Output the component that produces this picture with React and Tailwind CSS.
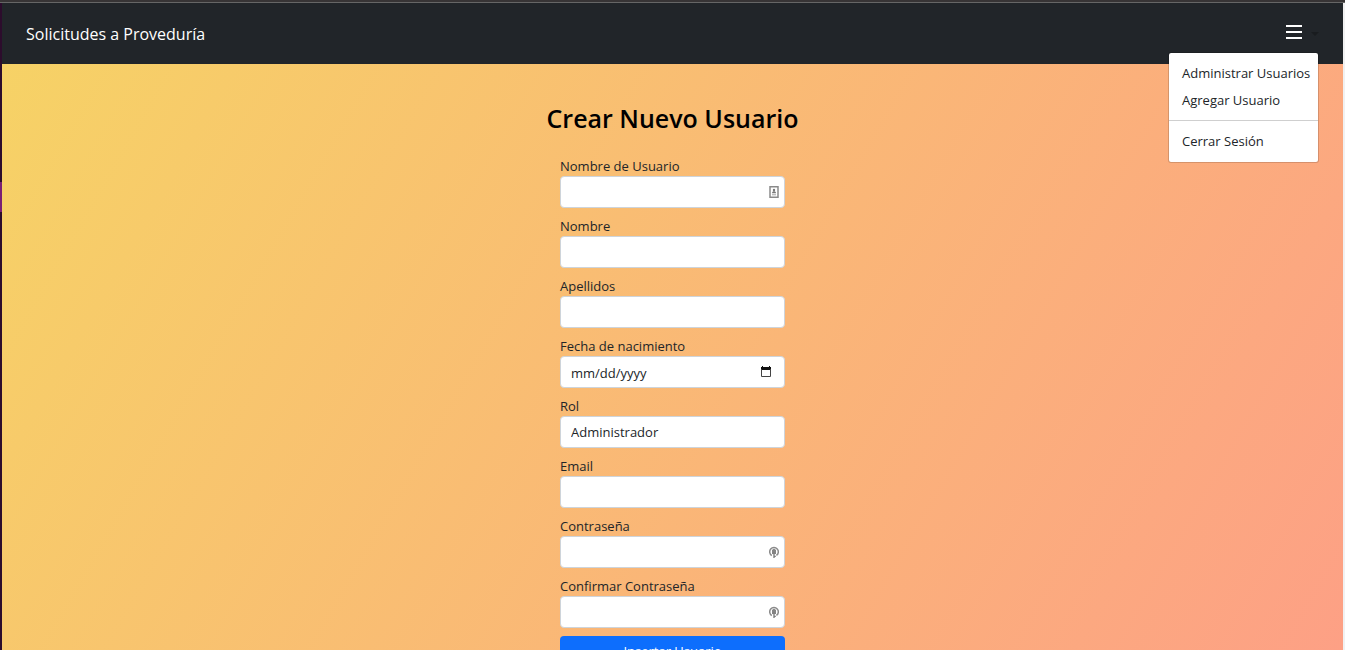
const labelClass = "text-[13px] leading-5 text-[#212529]";
const controlClass =
  "block h-8 w-full rounded border border-[#ced4da] bg-white px-[10px] pt-[2px] text-[13px] text-[#212529] outline-none";

function ContactIcon() {
  return (
    <svg viewBox="0 0 10 12" className="h-3 w-[10px]" fill="none" aria-hidden="true">
      <rect x="1" y="0.75" width="8" height="10.5" stroke="#8a8a8a" strokeWidth="1.5" />
      <circle cx="5" cy="4" r="1.2" fill="#777" />
      <path d="M3 7.2C3 5.7 4 5.2 5 5.2s2 .5 2 2z" fill="#777" />
      <path d="M3 8.8h4" stroke="#999" strokeWidth="0.9" />
    </svg>
  );
}

function KeyIcon() {
  return (
    <svg viewBox="0 0 10 12" className="h-3 w-[10px]" fill="none" aria-hidden="true">
      <path d="M2.8 9.5A4.3 4.3 0 1 1 7.4 9.4" stroke="#8a8a8a" strokeWidth="1.5" />
      <path d="M5 2.6 7 4v4H3V4z" fill="#858585" />
      <path d="M5 6v6M4.6 10.4h2.2" stroke="#808080" strokeWidth="1.4" />
    </svg>
  );
}

function CalendarIcon() {
  return (
    <svg viewBox="0 0 12 12" className="h-3 w-3" fill="none" aria-hidden="true">
      <path d="M2 0h1v1h6V0h1v1h1v3H1V1h1z" fill="#111" />
      <path d="M1.5 3v7.5h9V3" stroke="#444" strokeWidth="1" />
    </svg>
  );
}

function Field({ id, label, icon, iconClass = "right-[6px]", ...props }) {
  return (
    <div className="flex flex-col">
      <label htmlFor={id} className={labelClass}>{label}</label>
      <div className="relative">
        <input id={id} className={controlClass + " placeholder:text-[#212529]"} {...props} />
        {icon && <span className={"pointer-events-none absolute inset-y-0 flex items-center " + iconClass}>{icon}</span>}
      </div>
    </div>
  );
}

export default function App() {
  return (
    <div className="flex h-screen flex-col overflow-hidden font-['Open_Sans','Noto_Sans',sans-serif]">
      <div className="h-[3px] shrink-0 border-b border-[#666] bg-[#373435]" />
      <div className="flex min-h-0 flex-1">
        <div className="flex w-[2px] shrink-0 flex-col bg-[#2c0c2c]">
          <div className="mt-[179px] h-[30px] bg-[#7a1f74]" />
        </div>
        <div className="flex min-w-0 flex-1 flex-col bg-[linear-gradient(120deg,#f6d365_0%,#fda085_100%)]">
          <header className="flex h-[61px] shrink-0 items-center justify-between bg-[#212529] px-6">
            <a href="#inicio" className="text-base text-white">Solicitudes a Proveduría</a>
            <div className="relative pb-1">
              <button type="button" aria-label="Menú" aria-expanded="true" className="flex items-center gap-2">
                <svg viewBox="0 0 18 14" className="h-[14px] w-[18px]" aria-hidden="true">
                  <path d="M1 1h16M1 7h16M1 13h16" stroke="#fff" strokeWidth="2" />
                </svg>
                <svg viewBox="0 0 8 4" className="mt-1 h-1 w-2" aria-hidden="true">
                  <path d="M0 0h8L4 4z" fill="#191c1f" />
                </svg>
              </button>
              <nav className="absolute top-[27px] right-0 w-[151px] rounded-[3px] border border-black/15 bg-white bg-clip-padding py-[7px] text-[13px] leading-[27px] whitespace-nowrap text-[#212529]">
                <a href="#usuarios" className="block px-[13px]">Administrar Usuarios</a>
                <a href="#agregar" className="block px-[13px]">Agregar Usuario</a>
                <hr className="mt-[6px] mb-[7px] border-t border-[#cfcfcf]" />
                <a href="#salir" className="block px-[13px]">Cerrar Sesión</a>
              </nav>
            </div>
          </header>
          <main className="flex flex-col items-center pt-9">
            <h1 className="text-[25px] leading-9 font-semibold text-black">Crear Nuevo Usuario</h1>
            <form className="mt-5 flex w-[225px] flex-col gap-2">
              <Field id="usuario" label="Nombre de Usuario" icon={<ContactIcon />} />
              <Field id="nombre" label="Nombre" />
              <Field id="apellidos" label="Apellidos" />
              <Field id="fecha" label="Fecha de nacimiento" placeholder="mm/dd/yyyy" icon={<CalendarIcon />} iconClass="right-[13px]" />
              <div className="flex flex-col">
                <label htmlFor="rol" className={labelClass}>Rol</label>
                <select id="rol" className={controlClass + " appearance-none"}>
                  <option>Administrador</option>
                </select>
              </div>
              <Field id="email" label="Email" type="email" />
              <Field id="clave" label="Contraseña" type="password" icon={<KeyIcon />} />
              <Field id="confirmar" label="Confirmar Contraseña" type="password" icon={<KeyIcon />} />
              <button type="submit" className="h-8 rounded bg-[#0d6efd] text-[13px] text-white">Insertar Usuario</button>
            </form>
          </main>
        </div>
        <div className="w-[2px] shrink-0 bg-[#f1f1f1]" />
      </div>
    </div>
  );
}
